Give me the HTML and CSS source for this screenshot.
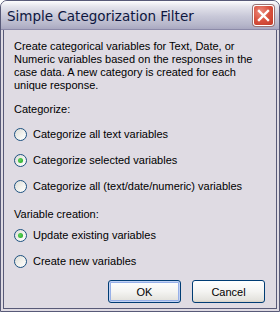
FILE: index.html
```html
<!DOCTYPE html>
<html lang="en">
<head>
  <meta charset="UTF-8" />
  <title>Simple Categorization Filter</title>
  <link rel="stylesheet" href="styles.css">
</head>
<body>

  <div class="window">
    <!-- Title bar -->
    <div class="titlebar">
      <span class="title">Simple Categorization Filter</span>
      <button class="close-btn" aria-label="Close">
        <svg width="13" height="13" viewBox="0 0 13 13">
          <path d="M2 2 L11 11 M11 2 L2 11" stroke="#fff" stroke-width="2.4" stroke-linecap="square"/>
        </svg>
      </button>
    </div>

    <!-- Dialog body -->
    <div class="content">
      <p class="intro">Create categorical variables for Text, Date, or Numeric variables based on the responses in the case data. A new category is created for each unique response.</p>

      <div class="group-label first">Categorize:</div>
      <ul class="options first">
        <li><span class="radio"></span>Categorize all text variables</li>
        <li><span class="radio checked"></span>Categorize selected variables</li>
        <li><span class="radio"></span>Categorize all (text/date/numeric) variables</li>
      </ul>

      <div class="group-label">Variable creation:</div>
      <ul class="options">
        <li><span class="radio checked"></span>Update existing variables</li>
        <li><span class="radio"></span>Create new variables</li>
      </ul>

      <div class="button-row">
        <button class="btn default">OK</button>
        <button class="btn">Cancel</button>
      </div>
    </div>
  </div>

</body>
</html>
```

FILE: styles.css
```css
html, body {
  margin: 0;
  padding: 0;
}

body {
  font-family: "Liberation Sans", Arial, sans-serif;
  font-size: 11px;
  color: #000;
  background: #fff;
}

.window {
  width: 280px;
  height: 312px;
  box-sizing: border-box;
  display: flex;
  flex-direction: column;
  background: #dfdbe3;
  border: 1px solid #585a78;
  border-radius: 7px 7px 0 0;
  overflow: hidden;
}

.titlebar {
  height: 28px;
  flex: none;
  display: flex;
  align-items: center;
  justify-content: space-between;
  padding: 0 4px 0 6px;
  background: linear-gradient(#fdfdfe 0%, #e4e4ec 20%, #c8c8d8 55%, #b6b6ca 85%, #a9a8c0 100%);
  border-bottom: 1px solid #8c8aa8;
}

.titlebar .title {
  font-family: "DejaVu Sans", sans-serif;
  font-size: 13.5px;
  color: #0e1740;
  margin-top: 1px;
}

.close-btn {
  width: 21px;
  height: 21px;
  margin-right: 1px;
  padding: 0;
  border: 1px solid #fff;
  border-radius: 3px;
  background: radial-gradient(circle at 35% 30%, #ec8c7e 0%, #d8513e 50%, #c23a28 100%);
  box-shadow: 0 0 0 1px #9a7474;
  display: flex;
  align-items: center;
  justify-content: center;
}

.content {
  flex: 1;
  margin: 0 2px 2px 2px;
  padding: 10px 11px 0 10px;
  border-left: 1px solid #585a78;
  border-right: 1px solid #585a78;
  border-bottom: 1px solid #585a78;
  display: flex;
  flex-direction: column;
}

.intro {
  margin: 0;
  line-height: 13px;
}

.group-label {
  margin-top: 9px;
  line-height: 13px;
}

.group-label.first {
  margin-top: 11px;
}

.options {
  list-style: none;
  margin: 1px 0 0 0;
  padding: 0;
}

.options.first {
  margin-top: 5px;
}

.options li {
  display: flex;
  align-items: center;
  height: 26px;
}

.radio {
  width: 11px;
  height: 11px;
  margin-right: 6px;
  border: 1px solid #1c5180;
  border-radius: 50%;
  background: linear-gradient(135deg, #dcdcd6 0%, #f4f4f0 60%, #fff 100%);
  display: flex;
  align-items: center;
  justify-content: center;
}

.radio.checked::after {
  content: "";
  width: 5px;
  height: 5px;
  border-radius: 50%;
  background: radial-gradient(circle at 40% 40%, #5cd65c, #21a121);
}

.button-row {
  margin-top: auto;
  margin-bottom: 5px;
  display: flex;
  justify-content: flex-end;
  gap: 11px;
}

.btn {
  width: 73px;
  height: 23px;
  font-family: "Liberation Sans", Arial, sans-serif;
  font-size: 11px;
  color: #000;
  border: 1px solid #003c74;
  border-radius: 3px;
  background: linear-gradient(#ffffff 0%, #f4f4f2 50%, #e4e3de 90%, #d6d0c5 100%);
}

.btn.default {
  box-shadow: inset 0 0 0 1px #c2d2f4, inset 0 0 0 2px #97b0e8;
}
```
